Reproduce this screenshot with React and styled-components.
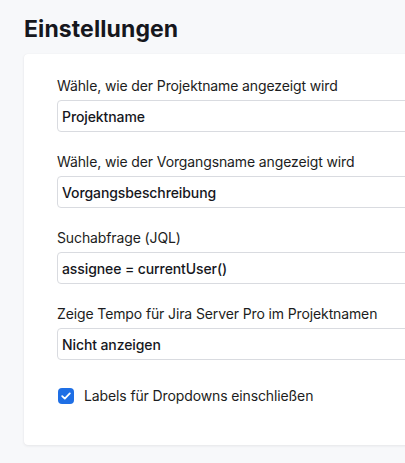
import React from 'react';
import styled, { createGlobalStyle } from 'styled-components';

const GlobalStyle = createGlobalStyle`
  html, body {
    margin: 0;
    padding: 0;
    background: #f7f8fa;
    overflow: hidden;
  }
  body {
    font-family: Inter, "Noto Sans", sans-serif;
    color: #1c1d21;
  }
`;

const fields = [
  { label: 'Wähle, wie der Projektname angezeigt wird', value: 'Projektname' },
  { label: 'Wähle, wie der Vorgangsname angezeigt wird', value: 'Vorgangsbeschreibung' },
  { label: 'Suchabfrage (JQL)', value: 'assignee = currentUser()' },
  { label: 'Zeige Tempo für Jira Server Pro im Projektnamen', value: 'Nicht anzeigen' },
];

export default function App()
{
  return (
    <Page>
      <GlobalStyle />
      <Title>Einstellungen</Title>
      <Card>
        {fields.map((f) => (
          <Field key={f.label}>
            <Label>{f.label}</Label>
            <Input>{f.value}</Input>
          </Field>
        ))}
        <CheckRow>
          <Checkbox>
            <svg width="10" height="8" viewBox="0 0 10 8" fill="none">
              <path d="M1.2 4.1 L3.8 6.6 L8.8 1.4" stroke="#fff" strokeWidth="1.8" strokeLinecap="round" strokeLinejoin="round" />
            </svg>
          </Checkbox>
          <CheckLabel>Labels für Dropdowns einschließen</CheckLabel>
        </CheckRow>
      </Card>
    </Page>
  );
}

const Page = styled.div`
  width: 405px;
  height: 463px;
  padding: 15px 0 0 24px;
  box-sizing: border-box;
  overflow: hidden;
`;

const Title = styled.h1`
  margin: 0 0 10px;
  font-size: 23px;
  line-height: 29px;
  font-weight: 700;
  letter-spacing: 0.1px;
  color: #16171d;
`;

const Card = styled.div`
  width: 440px;
  box-sizing: border-box;
  background: #fff;
  border-radius: 4px;
  box-shadow: 0 1px 3px rgba(20, 25, 40, 0.08), 0 0 1px rgba(20, 25, 40, 0.06);
  padding: 22px 0 39px 33px;
  display: flex;
  flex-direction: column;
  gap: 20px;
`;

const Field = styled.div`
  display: flex;
  flex-direction: column;
  gap: 4px;
`;

const Label = styled.div`
  font-size: 14px;
  line-height: 20px;
  letter-spacing: -0.12px;
  color: #1c1d21;
`;

const Input = styled.div`
  height: 32px;
  box-sizing: border-box;
  border: 1px solid #d9dbe0;
  border-radius: 4px;
  padding: 0 0 0 4px;
  display: flex;
  align-items: center;
  font-size: 14px;
  font-weight: 480;
  letter-spacing: -0.1px;
  color: #16171d;
`;

const CheckRow = styled.div`
  display: flex;
  align-items: center;
  gap: 10px;
  margin-top: 6px;
  padding-left: 1px;
`;

const Checkbox = styled.span`
  width: 16px;
  height: 16px;
  border-radius: 4px;
  background: #1f6fe5;
  display: flex;
  align-items: center;
  justify-content: center;
`;

const CheckLabel = styled.span`
  font-size: 14px;
  line-height: 20px;
  letter-spacing: -0.12px;
  color: #1c1d21;
`;
